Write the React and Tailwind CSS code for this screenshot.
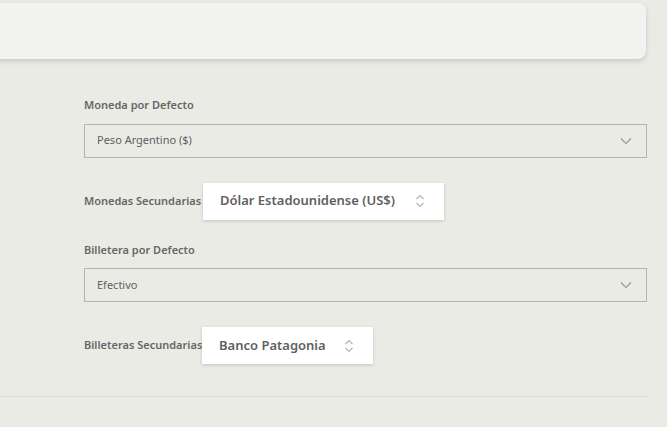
import React from "react";

const Chevron = () => (
  <svg width="12" height="8" viewBox="0 0 12 8" fill="none" stroke="#9a9a9a" strokeWidth="1.2">
    <path d="M1 1.5 L6 6.5 L11 1.5" />
  </svg>
);

const UpDown = () => (
  <svg width="10" height="14" viewBox="0 0 10 14" fill="none" stroke="#b5b5b5" strokeWidth="1.2">
    <path d="M1.5 5 L5 1.5 L8.5 5" />
    <path d="M1.5 9 L5 12.5 L8.5 9" />
  </svg>
);

function Select({ value }) {
  return (
    <div className="flex h-[34px] items-center justify-between border border-[#b3b3b0] pl-[12px] pr-[14px] text-[11px] text-[#5f5f5f]">
      <span>{value}</span>
      <Chevron />
    </div>
  );
}

function Tag({ value, width }) {
  return (
    <div
      className="flex h-[37px] items-center justify-between bg-white pl-[17px] pr-[19px] text-[13px] font-semibold text-[#5f5f5f] shadow-[0_1px_3px_rgba(0,0,0,0.18)]"
      style={{ width }}
    >
      <span>{value}</span>
      <UpDown />
    </div>
  );
}

export default function App() {
  return (
    <div
      className="h-[427px] w-[667px] overflow-hidden bg-[#ebebe6]"
      style={{ fontFamily: '"Noto Sans", "Open Sans", sans-serif' }}
    >
      <div className="pt-[3px] pr-[21px]">
        <div className="-ml-4 h-[56px] rounded-[8px] bg-[#f2f2f0] shadow-[0_2px_5px_rgba(0,0,0,0.16)]" />
      </div>
      <div className="pl-[84px] pr-[20px] pt-[38px]">
        <div className="whitespace-nowrap text-[11px] font-semibold text-[#666]">Moneda por Defecto</div>
        <div className="mt-[10px]">
          <Select value="Peso Argentino ($)" />
        </div>
        <div className="mt-[25px] flex items-center">
          <span className="w-[119px] whitespace-nowrap text-[11px] font-semibold text-[#666]">Monedas Secundarias</span>
          <Tag value="Dólar Estadounidense (US$)" width={241} />
        </div>
        <div className="mt-[22px] whitespace-nowrap text-[11px] font-semibold text-[#666]">Billetera por Defecto</div>
        <div className="mt-[10px]">
          <Select value="Efectivo" />
        </div>
        <div className="mt-[25px] flex items-center">
          <span className="w-[118px] whitespace-nowrap text-[11px] font-semibold text-[#666]">Billeteras Secundarias</span>
          <Tag value="Banco Patagonia" width={171} />
        </div>
      </div>
      <div className="mt-[32px] mr-[20px] h-px bg-[#d9d9d6]" />
    </div>
  );
}
